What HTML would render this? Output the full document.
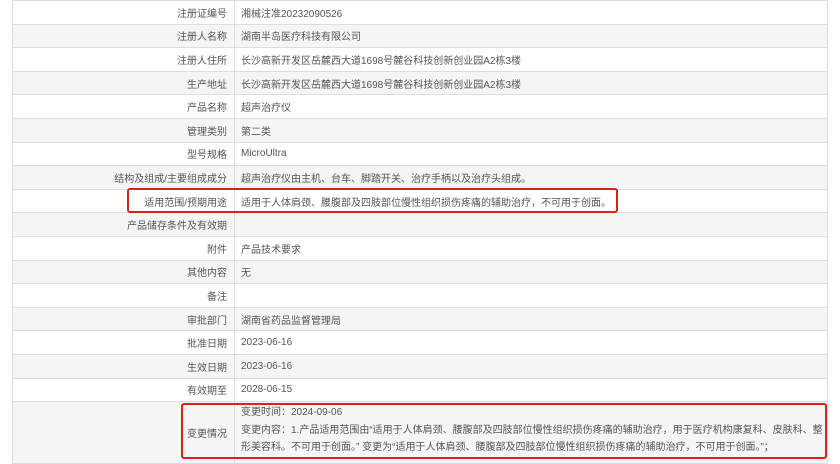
<!DOCTYPE html>
<html><head><meta charset="utf-8"><style>
body{margin:0;background:#fff;width:840px;height:460px;overflow:hidden;position:relative;font-family:"Liberation Sans","Noto Sans CJK SC",sans-serif;font-size:10px;color:#555}
table{position:absolute;left:12px;top:0;width:816px;border-collapse:collapse;table-layout:fixed}
tr{height:23.6px}
td{border:1px solid #ddd;height:23.6px;padding:0 6px;box-sizing:border-box;white-space:nowrap;overflow:hidden}
td.l{width:222px;text-align:right;padding-right:7px}
tr:nth-child(even) td{background:#f5f5f5}
.box{position:absolute;border:2px solid #d9221c;border-radius:3px}
.c{line-height:17.5px;padding-top:2px;vertical-align:top}
</style></head><body>
<table>
<tr><td class="l">注册证编号</td><td>湘械注准20232090526</td></tr>
<tr><td class="l">注册人名称</td><td>湖南半岛医疗科技有限公司</td></tr>
<tr><td class="l">注册人住所</td><td>长沙高新开发区岳麓西大道1698号麓谷科技创新创业园A2栋3楼</td></tr>
<tr><td class="l">生产地址</td><td>长沙高新开发区岳麓西大道1698号麓谷科技创新创业园A2栋3楼</td></tr>
<tr><td class="l">产品名称</td><td>超声治疗仪</td></tr>
<tr><td class="l">管理类别</td><td>第二类</td></tr>
<tr><td class="l">型号规格</td><td>MicroUltra</td></tr>
<tr><td class="l">结构及组成/主要组成成分</td><td>超声治疗仪由主机、台车、脚踏开关、治疗手柄以及治疗头组成。</td></tr>
<tr><td class="l">适用范围/预期用途</td><td>适用于人体肩颈、腰腹部及四肢部位慢性组织损伤疼痛的辅助治疗，不可用于创面。</td></tr>
<tr><td class="l">产品储存条件及有效期</td><td></td></tr>
<tr><td class="l">附件</td><td>产品技术要求</td></tr>
<tr><td class="l">其他内容</td><td>无</td></tr>
<tr><td class="l">备注</td><td></td></tr>
<tr><td class="l">审批部门</td><td>湖南省药品监督管理局</td></tr>
<tr><td class="l">批准日期</td><td>2023-06-16</td></tr>
<tr><td class="l">生效日期</td><td>2023-06-16</td></tr>
<tr><td class="l">有效期至</td><td>2028-06-15</td></tr>
<tr style="height:62px"><td class="l" style="height:62px">变更情况</td><td class="c" style="height:62px">变更时间：2024-09-06<br>变更内容：1.产品适用范围由“适用于人体肩颈、腰腹部及四肢部位慢性组织损伤疼痛的辅助治疗，用于医疗机构康复科、皮肤科、整<br>形美容科。不可用于创面。” 变更为“适用于人体肩颈、腰腹部及四肢部位慢性组织损伤疼痛的辅助治疗，不可用于创面。”；</td></tr>
</table>
<div class="box" style="left:127px;top:188px;width:487px;height:21px"></div>
<div class="box" style="left:181px;top:403px;width:642px;height:52px"></div>
</body></html>
